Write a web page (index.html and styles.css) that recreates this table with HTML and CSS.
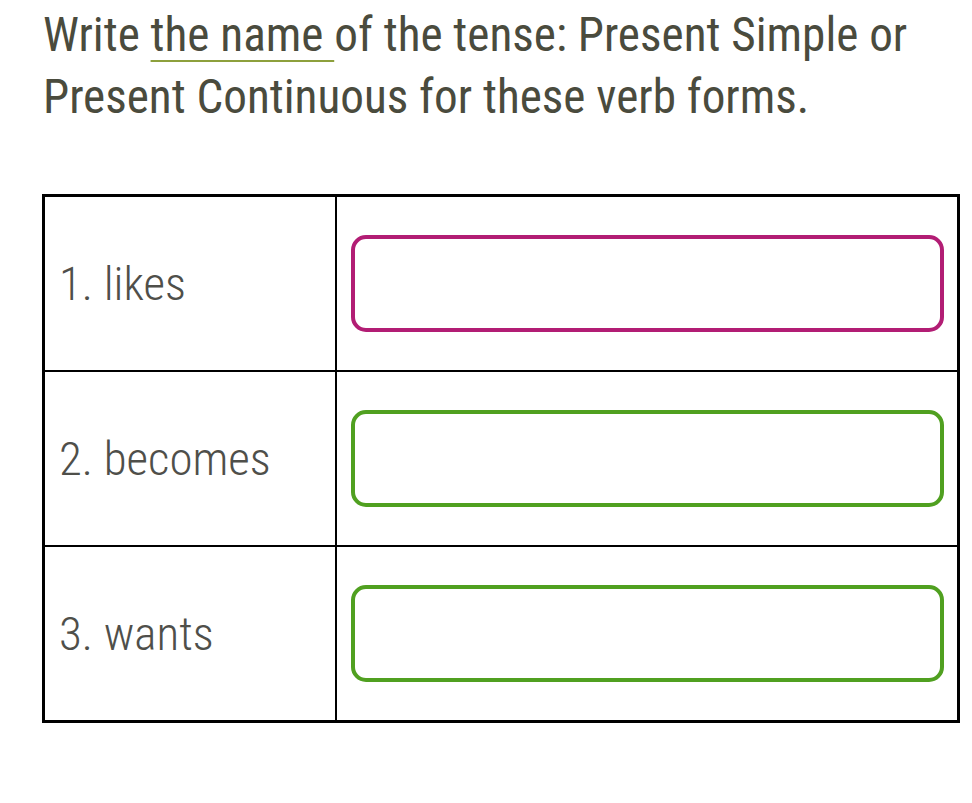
FILE: index.html
```html
<!DOCTYPE html>
<html lang="en">
<head>
<meta charset="utf-8">
<title>Tense exercise</title>
<link rel="stylesheet" href="styles.css">
</head>
<body>
<main class="page">
  <p class="task">Write <span class="gloss">the name </span>of the tense: Present Simple or Present Continuous for these verb forms.</p>
  <div class="table">
    <div class="row">
      <div class="cell label">1. likes</div>
      <div class="cell answer"><div class="box box-pink"></div></div>
    </div>
    <div class="row">
      <div class="cell label">2. becomes</div>
      <div class="cell answer"><div class="box box-green"></div></div>
    </div>
    <div class="row">
      <div class="cell label">3. wants</div>
      <div class="cell answer"><div class="box box-green"></div></div>
    </div>
  </div>
</main>
</body>
</html>
```
FILE: styles.css
```css
html, body {
  margin: 0;
  padding: 0;
  background: #ffffff;
}

.page {
  padding: 0 0 0 42px;
  font-family: Roboto, "Noto Sans", sans-serif;
}

.task {
  margin: 0;
  padding: 4px 0 0 1px;
  width: 900px;
  font-size: 47.2px;
  font-stretch: 80%;
  line-height: 62px;
  color: #4a4b3d;
  font-weight: 400;
}

.gloss {
  text-decoration: underline;
  text-decoration-color: #8da03c;
  text-decoration-thickness: 2px;
  text-underline-offset: 9px;
}

.table {
  margin-top: 66px;
  width: 918px;
  box-sizing: border-box;
  border: 3px solid #000;
}

.row {
  display: grid;
  grid-template-columns: 292px 1fr;
  height: 173px;
}

.row + .row {
  border-top: 2px solid #000;
}

.cell {
  display: flex;
  align-items: center;
}

.label {
  border-right: 2px solid #000;
  padding-left: 14px;
  font-size: 47px;
  font-stretch: 80%;
  font-weight: 300;
  color: #4f4f4a;
}

.answer {
  padding: 0 13px 0 14px;
}

.box {
  width: 100%;
  height: 97px;
  box-sizing: border-box;
  border: 4px solid;
  border-radius: 15px;
}

.box-pink {
  border-color: #b21d74;
}

.box-green {
  border-color: #50a020;
}
```
